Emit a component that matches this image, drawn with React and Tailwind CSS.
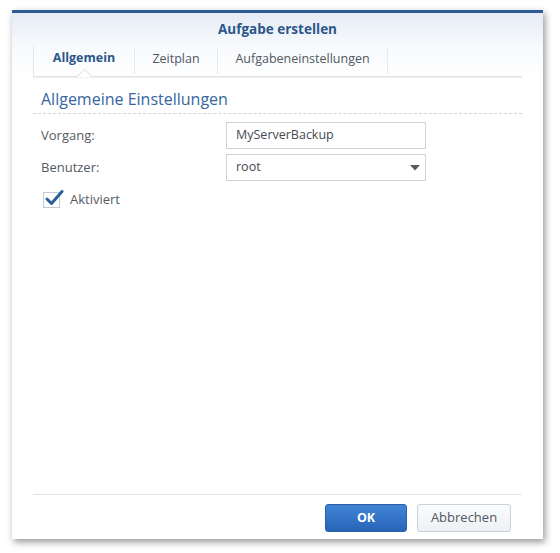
export default function App() {
  const font = { fontFamily: '"Open Sans", "Noto Sans", sans-serif' };
  return (
    <div className="w-[560px] h-[553px] bg-white pt-[10px] pl-[12px]" style={font}>
      <div className="w-[531px] h-[529px] bg-white border-t-[3px] border-[#2c5b95] shadow-[2px_3px_7px_rgba(0,0,0,0.42)] flex flex-col">
        <div className="bg-gradient-to-b from-[#e5ecf5] via-[#f7f9fc] to-white">
          <div className="h-[33px] flex items-center justify-center text-[13.5px] font-bold text-[#2b5689]">
            Aufgabe erstellen
          </div>
          <div className="mx-[21px] h-[31px] flex border-b border-[#dde2e8] shadow-[0_1px_1px_rgba(0,0,0,0.05)]">
            <div className="relative w-[101px] flex items-center justify-center pb-[6px] text-[12.5px] font-bold text-[#2b5689] border-l border-[#e6e9ed]">
              Allgemein
              <svg className="absolute left-[43px] bottom-[-1px]" width="15" height="8" viewBox="0 0 15 8">
                <path d="M0 7.5 L7.5 0.5 L15 7.5" fill="white" stroke="#d6dbe2" strokeWidth="1" />
                <rect x="1" y="7" width="13" height="1" fill="white" />
              </svg>
            </div>
            <div className="w-[83px] flex items-center justify-center pb-[4px] text-[12.5px] text-[#505862] border-l border-[#e6e9ed] my-[2px]">
              Zeitplan
            </div>
            <div className="w-[171px] flex items-center justify-center pb-[4px] text-[12.5px] text-[#505862] border-l border-r border-[#e6e9ed] my-[2px]">
              Aufgabeneinstellungen
            </div>
          </div>
        </div>

        <div className="mx-[21px] mt-[12px] pl-[8px] pb-[3px] border-b border-dashed border-[#c9d6e3] text-[16px] leading-[21px] text-[#3566a0]">
          Allgemeine Einstellungen
        </div>

        <div className="mx-[21px] pl-[8px] mt-[8px] flex flex-col gap-[5px]">
          <div className="flex items-center h-[27px]">
            <div className="w-[185px] text-[13px] text-[#555b63]">Vorgang:</div>
            <div className="w-[200px] h-[27px] border border-[#cdd3da] flex items-center px-[9px] text-[12.5px] text-[#444a52]">
              MyServerBackup
            </div>
          </div>
          <div className="flex items-center h-[27px]">
            <div className="w-[185px] text-[13px] text-[#555b63]">Benutzer:</div>
            <div className="w-[200px] h-[27px] border border-[#cdd3da] flex items-center justify-between pl-[9px] pr-[5px] text-[12.5px] text-[#444a52]">
              <span>root</span>
              <svg width="10" height="6" viewBox="0 0 10 6">
                <path d="M0 0 H10 L5 5.5 Z" fill="#555b63" />
              </svg>
            </div>
          </div>
          <div className="flex items-center h-[22px] mt-[3px] pl-[2px]">
            <div className="relative w-[17px] h-[16px] border border-[#c3cad3] bg-white">
              <svg className="absolute left-[1px] top-[-4px]" width="19" height="18" viewBox="0 0 19 18">
                <path d="M2 10 L6.5 14.5 L17 2.5" fill="none" stroke="#2d5e9c" strokeWidth="3" strokeLinecap="round" strokeLinejoin="round" />
              </svg>
            </div>
            <span className="ml-[10px] text-[13px] text-[#555b63]">Aktiviert</span>
          </div>
        </div>

        <div className="flex-1" />

        <div className="mx-[21px] border-t border-[#e2e5e9] pt-[9px] pb-[7px] flex justify-end pr-[11px] gap-[10px]">
          <button className="w-[82px] h-[28px] rounded-[3px] border border-[#2a5ea8] bg-gradient-to-b from-[#4185d6] to-[#2864b8] text-white text-[12.5px] font-bold">
            OK
          </button>
          <button className="w-[94px] h-[28px] rounded-[3px] border border-[#cbd1d8] bg-gradient-to-b from-[#fafbfc] to-[#eef1f4] text-[#505862] text-[13px]">
            Abbrechen
          </button>
        </div>
      </div>
    </div>
  );
}
